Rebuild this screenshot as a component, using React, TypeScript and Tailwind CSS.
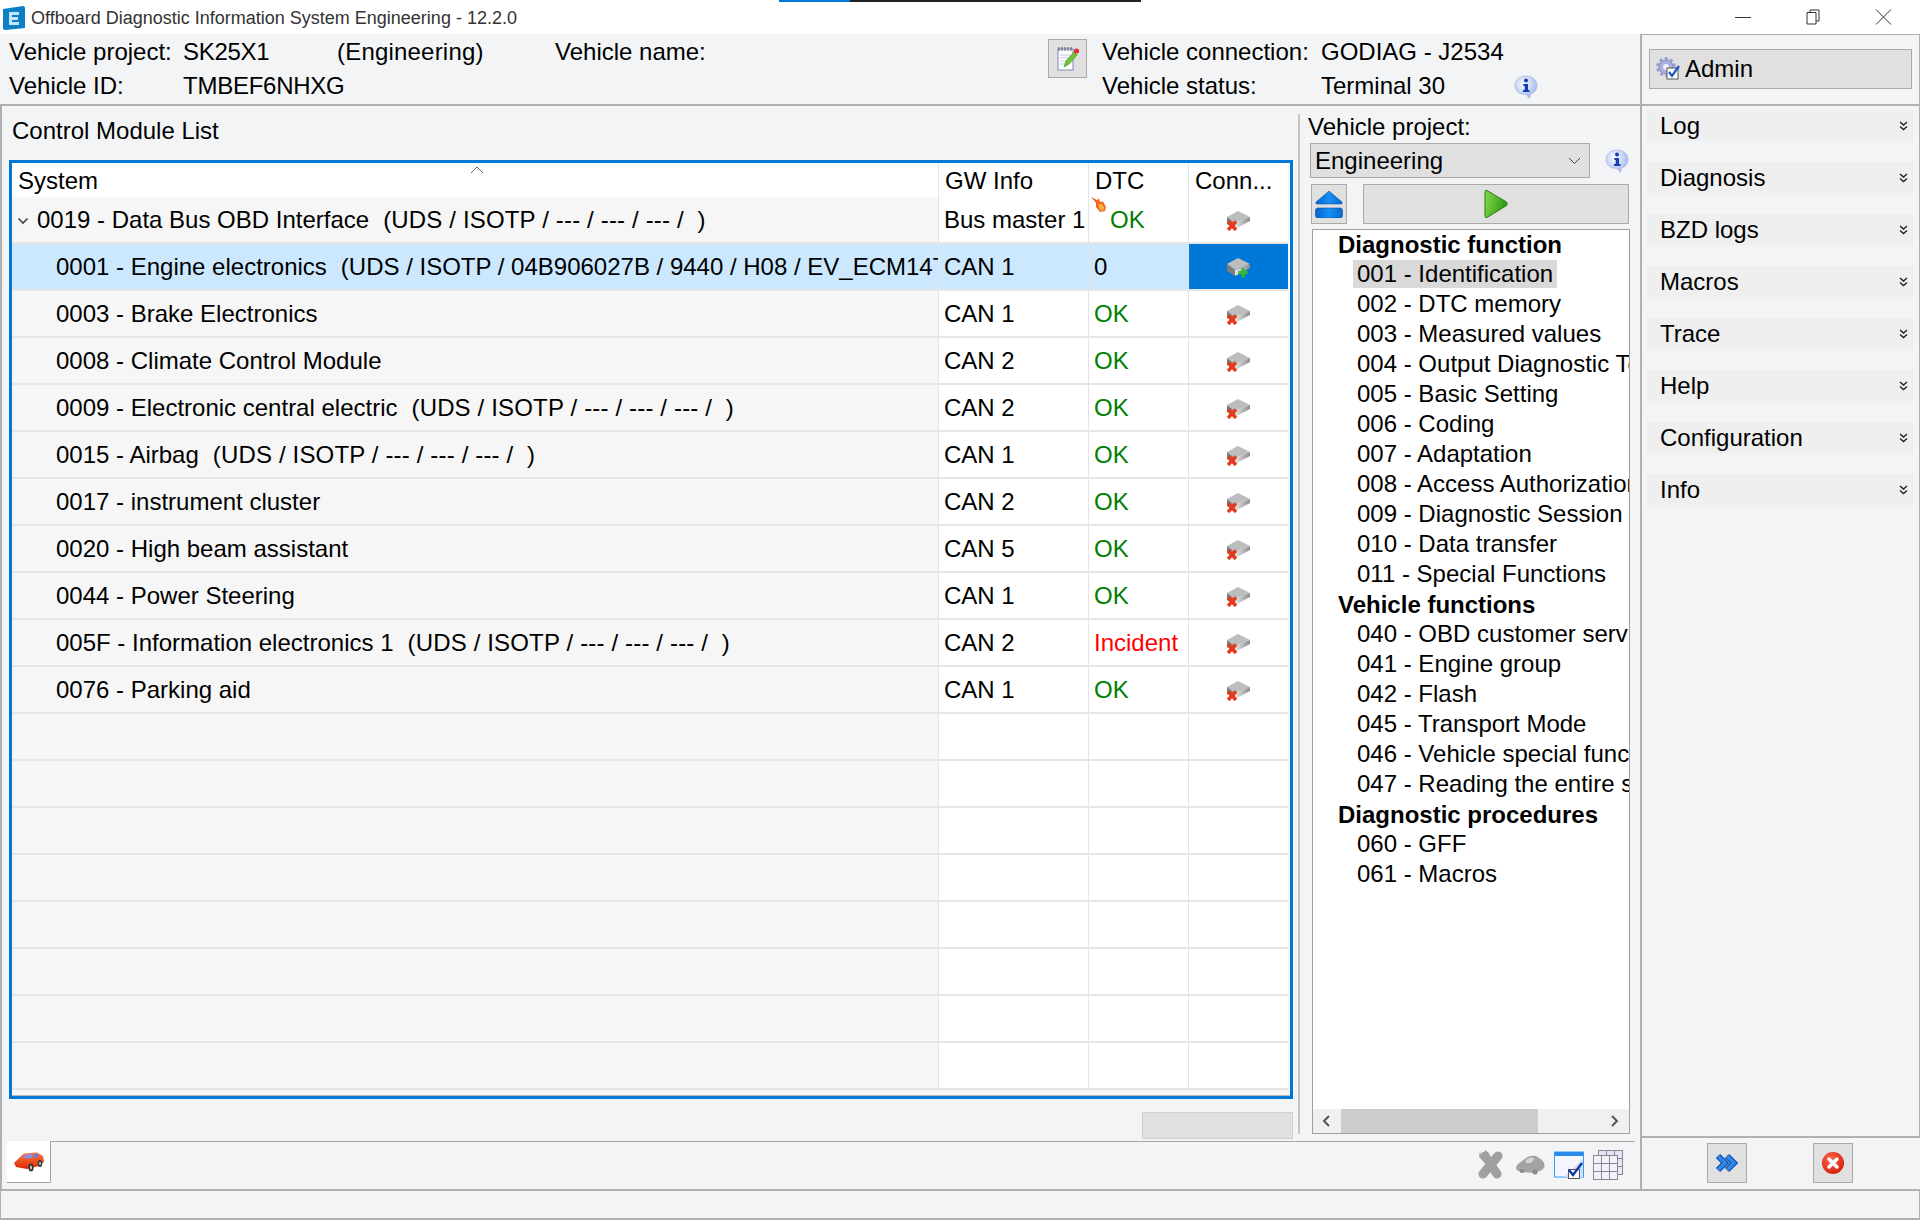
import React from "react";

const F = "font-['Liberation_Sans',Arial,sans-serif]";

function Drive({ kind }: { kind: "x" | "plus" }) {
  return (
    <svg width="23" height="20" viewBox="0 0 23 20" className="mt-[2px]">
      <defs>
        <linearGradient id="drv" x1="0" y1="0" x2="1" y2="0">
          <stop offset="0" stopColor="#e6e6e6" />
          <stop offset="1" stopColor="#8c8c8c" />
        </linearGradient>
      </defs>
      <path d="M0 6 L11 0 L23 6 L8 12 Z" fill="#bdbdbd" />
      <path d="M8 12 L23 6 L23 10 L8 18 Z" fill="url(#drv)" />
      <path d="M0 6 L8 12 L8 18 L0 13 Z" fill="#7d7d7d" />
      {kind === "x" ? (
        <path d="M1 10.500 L9 19 M9 10.500 L1 19" stroke="#e5391c" strokeWidth="3.400" fill="none" />
      ) : (
        <path d="M16 10 V19.500 M11.500 14.700 H20.500" stroke="#35b82f" strokeWidth="3.200" fill="none" />
      )}
    </svg>
  );
}

function Info() {
  return (
    <svg width="24" height="24" viewBox="0 0 24 24">
      <defs>
        <radialGradient id="inf" cx="0.4" cy="0.35" r="0.75">
          <stop offset="0" stopColor="#ffffff" />
          <stop offset="1" stopColor="#93abee" />
        </radialGradient>
      </defs>
      <path d="M12 1 C18.500 1 23 5 23 10.500 C23 15 20 18 16.500 19 L15.500 23.500 L12 19.500 C5.500 19.500 1 16 1 10.500 C1 5 5.500 1 12 1 Z" fill="url(#inf)" stroke="#aebbd8" strokeWidth="0.800" />
      <circle cx="12" cy="5.500" r="2" fill="#1241ad" />
      <path d="M9.300 9 H14 V15 H15.500 V17 H9 V15 H10.700 V11 H9.300 Z" fill="#1241ad" />
    </svg>
  );
}

function Chevrons() {
  return (
    <svg width="9" height="10" viewBox="0 0 9 10" className="shrink-0">
      <path d="M1 1 L4.500 4 L8 1 M1 5.500 L4.500 8.500 L8 5.500" stroke="#222" strokeWidth="1.400" fill="none" />
    </svg>
  );
}

function CarRed() {
  return (
    <svg width="32" height="22" viewBox="0 0 32 22">
      <defs>
        <linearGradient id="car" x1="0" y1="0" x2="0" y2="1">
          <stop offset="0" stopColor="#ff7a3c" />
          <stop offset="1" stopColor="#d92608" />
        </linearGradient>
      </defs>
      <path d="M1 12 L5 8 L11 2.500 L24 1.500 L30 5 L31 11 L26 15 L14 18 L3 16 Z" fill="url(#car)" />
      <path d="M9 7 L13 3.500 L20 3 L18 7.500 Z" fill="#8a8ee8" />
      <path d="M21 3 L26 3 L25 6 L20 7 Z" fill="#7478d0" />
      <ellipse cx="18" cy="16.500" rx="2.600" ry="4" fill="#333" />
      <ellipse cx="18" cy="16.500" rx="1" ry="2" fill="#ccc" />
      <ellipse cx="27" cy="12.500" rx="2.200" ry="3.600" fill="#333" />
      <ellipse cx="27" cy="12.500" rx="0.900" ry="1.800" fill="#ccc" />
    </svg>
  );
}

function NoteIcon() {
  return (
    <svg width="24" height="26" viewBox="0 0 24 26">
      <rect x="2" y="3" width="15" height="21" fill="#fff" stroke="#7d86b8" strokeWidth="1" />
      <path d="M3 1 V5 M6 1 V5 M9 1 V5 M12 1 V5 M15 1 V5" stroke="#555" strokeWidth="1" />
      <path d="M4 9 H15 M4 12 H15 M4 15 H13 M4 18 H13" stroke="#c4c9e6" strokeWidth="1" />
      <path d="M8 21 L10 15 L18 6 L21 9 L13 18 Z" fill="#6fc72f" stroke="#3d8a1a" strokeWidth="0.6" />
      <circle cx="20.500" cy="5" r="2.600" fill="#e0312a" />
    </svg>
  );
}

function AdminIcon() {
  return (
    <svg width="24" height="24" viewBox="0 0 24 24">
      <circle cx="10" cy="10" r="7" fill="#aab0dc" stroke="#7f86b6" strokeWidth="1" />
      <circle cx="10" cy="10" r="8.500" fill="none" stroke="#989fd0" strokeWidth="2.800" strokeDasharray="3 2.500" />
      <circle cx="10" cy="10" r="3" fill="#eef0fa" />
      <rect x="11" y="11" width="11" height="11" fill="#fff" stroke="#555" strokeWidth="1" />
      <path d="M13 15 L16 19 L23 9" stroke="#1557c9" strokeWidth="2.200" fill="none" />
    </svg>
  );
}

function Eject() {
  return (
    <svg width="28" height="28" viewBox="0 0 28 28">
      <defs>
        <linearGradient id="ej" x1="0" y1="0" x2="1" y2="0">
          <stop offset="0" stopColor="#0a62cf" />
          <stop offset="0.500" stopColor="#1590f2" />
          <stop offset="1" stopColor="#0b66d2" />
        </linearGradient>
      </defs>
      <path d="M14 1 L27 12 Q27.500 14 26 14 H2 Q0.500 14 1 12 Z" fill="url(#ej)" stroke="#0b4fa8" strokeWidth="0.6" />
      <rect x="0.500" y="18" width="27" height="10" rx="2.500" fill="url(#ej)" stroke="#0b4fa8" strokeWidth="0.6" />
    </svg>
  );
}

function Play() {
  return (
    <svg width="24" height="30" viewBox="0 0 24 30">
      <defs>
        <linearGradient id="pl" x1="0" y1="0" x2="1" y2="0.300">
          <stop offset="0" stopColor="#8ad94a" />
          <stop offset="1" stopColor="#2e9c16" />
        </linearGradient>
      </defs>
      <path d="M1 3 Q1 1 3 1.500 L22.500 13 Q24 15 22.500 16.500 L3 28.500 Q1 29 1 27 Z" fill="url(#pl)" stroke="#247d12" strokeWidth="1" />
    </svg>
  );
}

function Flame() {
  return (
    <svg width="16" height="16" viewBox="0 0 16 16">
      <path d="M0 0 L6 3 L8 1.500 L9 5 L12 4.500 L15 10 L14 14 L9 15 L5 10 L5 6 Z" fill="#f4661c" />
      <path d="M7 7 L11 7 L13.500 11 L12 13.500 L9 13 Z" fill="#fbb13c" />
    </svg>
  );
}

type Row = { name: string; proto?: string; gw: string; dtc: string; root?: boolean; sel?: boolean };

const rows: Row[] = [
  { name: "0019 - Data Bus OBD Interface", proto: "(UDS / ISOTP / --- / --- / --- /  )", gw: "Bus master 1", dtc: "OK", root: true },
  { name: "0001 - Engine electronics", proto: "(UDS / ISOTP / 04B906027B / 9440 / H08 / EV_ECM14TFS01104B906027B  )", gw: "CAN 1", dtc: "0", sel: true },
  { name: "0003 - Brake Electronics", gw: "CAN 1", dtc: "OK" },
  { name: "0008 - Climate Control Module", gw: "CAN 2", dtc: "OK" },
  { name: "0009 - Electronic central electric", proto: "(UDS / ISOTP / --- / --- / --- /  )", gw: "CAN 2", dtc: "OK" },
  { name: "0015 - Airbag", proto: "(UDS / ISOTP / --- / --- / --- /  )", gw: "CAN 1", dtc: "OK" },
  { name: "0017 - instrument cluster", gw: "CAN 2", dtc: "OK" },
  { name: "0020 - High beam assistant", gw: "CAN 5", dtc: "OK" },
  { name: "0044 - Power Steering", gw: "CAN 1", dtc: "OK" },
  { name: "005F - Information electronics 1", proto: "(UDS / ISOTP / --- / --- / --- /  )", gw: "CAN 2", dtc: "Incident" },
  { name: "0076 - Parking aid", gw: "CAN 1", dtc: "OK" },
];

const tree: { head: string; items: string[] }[] = [
  {
    head: "Diagnostic function",
    items: [
      "001 - Identification",
      "002 - DTC memory",
      "003 - Measured values",
      "004 - Output Diagnostic Test Mode",
      "005 - Basic Setting",
      "006 - Coding",
      "007 - Adaptation",
      "008 - Access Authorization",
      "009 - Diagnostic Session",
      "010 - Data transfer",
      "011 - Special Functions",
    ],
  },
  {
    head: "Vehicle functions",
    items: [
      "040 - OBD customer service",
      "041 - Engine group",
      "042 - Flash",
      "045 - Transport Mode",
      "046 - Vehicle special functions",
      "047 - Reading the entire system",
    ],
  },
  { head: "Diagnostic procedures", items: ["060 - GFF", "061 - Macros"] },
];

const menu = ["Log", "Diagnosis", "BZD logs", "Macros", "Trace", "Help", "Configuration", "Info"];

export default function App() {
  const empties = Array.from({ length: 8 });
  return (
    <div className={`${F} w-[1920px] h-[1220px] overflow-hidden bg-[#f3f4f6] text-[24px] leading-none text-black flex flex-col`}>
      {/* title bar */}
      <div className="relative h-[34px] bg-white flex items-center shrink-0">
        <div className="absolute top-0 left-[779px] w-[71px] h-[2px] bg-[#0078d7]" />
        <div className="absolute top-0 left-[850px] w-[291px] h-[2px] bg-[#222]" />
        <svg width="22" height="24" viewBox="0 0 22 24" className="ml-[3px] mt-[1px]">
          <path d="M0 3 L20 0 Q22 0 22 2 V22 L2 24 Q0 24 0 22 Z" fill="#0d7fc4" />
          <path d="M6 6 H16 V9 H9 V11 H15 V14 H9 V16 H16 V19 H6 Z" fill="#bfe6fb" />
        </svg>
        <span className="ml-[6px] mt-[2px] text-[18px] text-[#333]">Offboard Diagnostic Information System Engineering - 12.2.0</span>
        <div className="ml-auto mr-[2px] flex items-center">
          <div className="w-[70px] flex justify-center">
            <div className="w-[16px] h-[1px] bg-[#333]" />
          </div>
          <div className="w-[70px] flex justify-center">
            <svg width="14" height="16" viewBox="0 0 14 16">
              <path d="M4 3 V1 H13 V12 H10 M1 3.500 H10 V15 H1 Z" fill="none" stroke="#333" strokeWidth="1" />
            </svg>
          </div>
          <div className="w-[70px] flex justify-center">
            <svg width="17" height="16" viewBox="0 0 17 16">
              <path d="M1 0.500 L16 15.500 M16 0.500 L1 15.500" fill="none" stroke="#333" strokeWidth="1" />
            </svg>
          </div>
        </div>
      </div>

      <div className="flex flex-1 min-h-0">
        {/* left */}
        <div className="w-[1640px] shrink-0 flex flex-col">
          {/* header */}
          <div className="h-[72px] shrink-0 border-b-2 border-[#b0b0b0] flex">
            <div className="w-[1048px] shrink-0 pl-[9px] pt-[1px] grid grid-cols-[174px_154px_218px_1fr] grid-rows-[34px_34px] items-center">
              <span>Vehicle project:</span>
              <span className="tracking-[-0.3px]">SK25X1</span>
              <span className="tracking-[0.2px]">(Engineering)</span>
              <span>Vehicle name:</span>
              <span>Vehicle ID:</span>
              <span className="tracking-[-0.25px]">TMBEF6NHXG</span>
            </div>
            <div className="pt-[5px] shrink-0">
              <div className="w-[39px] h-[39px] bg-[#e0e0e0] border border-[#aaaaaa] flex items-center justify-center">
                <NoteIcon />
              </div>
            </div>
            <div className="ml-[15px] pt-[1px] grid grid-cols-[219px_193px_24px] grid-rows-[34px_34px] items-center">
              <span>Vehicle connection:</span>
              <span className="col-span-2">GODIAG - J2534</span>
              <span>Vehicle status:</span>
              <span>Terminal 30</span>
              <span className="mt-[2px]">
                <Info />
              </span>
            </div>
          </div>

          {/* content */}
          <div className="flex-1 min-h-0 flex border-l-2 border-[#b0b0b0]">
            {/* module list */}
            <div className="w-[1295px] shrink-0 flex flex-col pl-[7px]">
              <div className="h-[54px] shrink-0 pl-[3px] pb-[5px] flex items-center">Control Module List</div>
              <div className="w-[1284px] h-[939px] shrink-0 border-[3px] border-[#0078d7] bg-[#f6f6f6] overflow-hidden flex flex-col">
                <div className="h-[34px] shrink-0 bg-white flex items-center relative mr-[2px]">
                  <div className="w-[926px] pl-[6px] pt-[1px]">System</div>
                  <svg width="14" height="8" viewBox="0 0 14 8" className="absolute left-[458px] top-[3px]">
                    <path d="M1 7 L7 1 L13 7" stroke="#666" strokeWidth="1" fill="none" />
                  </svg>
                  <div className="w-[150px] pl-[6px] pt-[1px] border-l border-[#e4e4e4] h-full flex items-center">GW Info</div>
                  <div className="w-[100px] pl-[6px] pt-[1px] border-l border-[#e4e4e4] h-full flex items-center">DTC</div>
                  <div className="flex-1 pl-[6px] pt-[1px] border-l border-[#e4e4e4] h-full flex items-center">Conn...</div>
                </div>
                {rows.map((r) => (
                  <div key={r.name} className={`h-[47px] shrink-0 flex mr-[2px] border-b-2 border-[#e6e6e6] ${r.sel ? "bg-[#cce8ff]" : ""}`}>
                    <div className={`w-[926px] shrink-0 flex items-center whitespace-pre overflow-hidden ${r.root ? "pl-[5px]" : "pl-[44px]"}`}>
                      {r.root && (
                        <svg width="12" height="8" viewBox="0 0 12 8" className="mr-[8px] mt-[2px] shrink-0">
                          <path d="M1.500 1.500 L6 6 L10.500 1.500" stroke="#444" strokeWidth="1.600" fill="none" />
                        </svg>
                      )}
                      <span>{r.name}</span>
                      {r.proto && (
                        <span className={`ml-[14px] ${r.sel ? "" : "tracking-[0.16px]"}`}>{r.proto}</span>
                      )}
                    </div>
                    <div className={`w-[150px] shrink-0 pl-[5px] border-l border-[#e4e4e4] flex items-center whitespace-nowrap overflow-hidden ${r.sel ? "" : "bg-white"}`}>{r.gw}</div>
                    <div className={`w-[100px] shrink-0 pl-[5px] border-l border-[#e4e4e4] flex items-center relative ${r.sel ? "" : "bg-white"} ${r.dtc === "OK" ? "text-[#008000]" : r.dtc === "Incident" ? "text-[#ff0000]" : ""}`}>
                      {r.root && (
                        <span className="absolute left-[2px] top-0">
                          <Flame />
                        </span>
                      )}
                      <span className={r.root ? "ml-[16px]" : ""}>{r.dtc}</span>
                    </div>
                    <div className={`flex-1 border-l border-[#e4e4e4] flex items-center justify-center ${r.sel ? "bg-[#0078d7]" : "bg-white"}`}>
                      <Drive kind={r.sel ? "plus" : "x"} />
                    </div>
                  </div>
                ))}
                {empties.map((_, i) => (
                  <div key={i} className="h-[47px] shrink-0 flex mr-[2px] border-b-2 border-[#e6e6e6]">
                    <div className="w-[926px] shrink-0" />
                    <div className="w-[150px] shrink-0 border-l border-[#e4e4e4] bg-white" />
                    <div className="w-[100px] shrink-0 border-l border-[#e4e4e4] bg-white" />
                    <div className="flex-1 border-l border-[#e4e4e4] bg-white" />
                  </div>
                ))}
                <div className="flex-1 border-b border-[#b8b8b8]" />
              </div>
              <div className="flex justify-end pt-[13px] pr-[4px]">
                <div className="w-[151px] h-[27px] bg-[#e0e0e0] border border-[#cfcfcf]" />
              </div>
            </div>

            {/* function panel */}
            <div className="flex-1 min-w-0 flex flex-col pt-[8px] pb-[7px]">
              <div className="flex-1 min-h-0 ml-[1px] border-l-2 border-[#c4c4c4] pl-[8px] flex flex-col">
                <div className="h-[26px] flex items-center">Vehicle project:</div>
                <div className="flex items-center mt-[3px]">
                  <div className="ml-[2px] w-[280px] h-[35px] bg-[#e0e0e0] border border-[#aaaaaa] flex items-center justify-between pl-[4px] pr-[8px]">
                    <span>Engineering</span>
                    <svg width="13" height="8" viewBox="0 0 13 8">
                      <path d="M1 1 L6.500 6.500 L12 1" stroke="#444" strokeWidth="1" fill="none" />
                    </svg>
                  </div>
                  <div className="ml-[15px]">
                    <Info />
                  </div>
                </div>
                <div className="flex mt-[6px] gap-[16px] ml-[3px]">
                  <div className="w-[36px] h-[40px] bg-[#e0e0e0] border border-[#aaaaaa] flex items-center justify-center">
                    <Eject />
                  </div>
                  <div className="w-[266px] h-[40px] bg-[#e0e0e0] border border-[#aaaaaa] flex items-center justify-center">
                    <Play />
                  </div>
                </div>
                <div className="ml-[4px] mt-[5px] w-[318px] flex-1 min-h-0 border border-[#a0a0a0] bg-white flex flex-col overflow-hidden">
                  <div className="flex-1 min-h-0 overflow-hidden pl-[25px] pt-[1px] whitespace-nowrap">
                    {tree.map((t, i) => (
                      <div key={t.head} className={i > 0 ? "mt-[2px]" : ""}>
                        <div className="h-[28px] flex items-center font-bold">{t.head}</div>
                        {t.items.map((it) => (
                          <div key={it} className="h-[30px] flex items-center pl-[15px]">
                            <span className={`px-[4px] h-[28px] flex items-center ${it.startsWith("001") ? "bg-[#d9d9d9]" : ""}`}>{it}</span>
                          </div>
                        ))}
                      </div>
                    ))}
                  </div>
                  <div className="h-[24px] shrink-0 bg-[#f0f0f0] flex items-center justify-between pl-[8px] pr-[9px] relative">
                    <svg width="10" height="12" viewBox="0 0 10 12">
                      <path d="M8 1 L3 6 L8 11" stroke="#555" strokeWidth="2" fill="none" />
                    </svg>
                    <div className="absolute left-[28px] top-0 w-[197px] h-full bg-[#cdcdcd]" />
                    <svg width="10" height="12" viewBox="0 0 10 12">
                      <path d="M2 1 L7 6 L2 11" stroke="#555" strokeWidth="2" fill="none" />
                    </svg>
                  </div>
                </div>
              </div>
            </div>
          </div>

          {/* bottom toolbar */}
          <div className="h-[50px] shrink-0 border-b-2 border-[#b0b0b0] flex border-l-2 border-l-[#b0b0b0] pl-[5px] items-start">
            <div className="w-[44px] h-[42px] bg-white border-r border-b border-[#a0a0a0] rounded-br-[2px] flex items-center justify-center shrink-0">
              <CarRed />
            </div>
            <div className="w-[1584px] h-[42px] border-t border-[#a8a8a8] flex items-center justify-end pr-[12px] pt-[4px] gap-[9px]">
              <svg width="28" height="29" viewBox="0 0 28 29" className="mr-[2px]">
                <path d="M9 6 L21 24 M22 6 L7 24" stroke="#a0a0a0" strokeWidth="9" strokeLinecap="round" fill="none" />
                <path d="M4 1 L5 6 L9 6 L9 0 L13 3 L13 9 L7 11 L3 7 Z" fill="#a0a0a0" />
              </svg>
              <svg width="30" height="22" viewBox="0 0 30 22">
                <path d="M1 13 L3 10 L11 4 Q15 1 21 2 L27 6 Q30 9 29.500 13 L27 16 L20 19 L7 18 L1.500 16 Z" fill="#a3a3a3" />
                <path d="M11 6 L15 3.500 L20 4 L16 9 L10 9 Z" fill="#d4d4d4" />
                <ellipse cx="7" cy="17" rx="2.500" ry="2" fill="#8a8a8a" />
                <ellipse cx="20" cy="18" rx="2.500" ry="2.500" fill="#8a8a8a" />
              </svg>
              <svg width="30" height="28" viewBox="0 0 30 28">
                <rect x="0.500" y="1" width="29" height="25" fill="#f5f6ff" stroke="#2aa0ff" strokeWidth="1" />
                <rect x="1" y="1" width="28" height="4" fill="#2a8bea" />
                <path d="M10 26 L29 8 V26 Z" fill="#d9daf5" />
                <rect x="14.500" y="18.500" width="11" height="9" fill="#fff" stroke="#555" />
                <path d="M15 19 L19 24 L28 12" stroke="#0f3fa8" strokeWidth="2.500" fill="none" />
              </svg>
              <svg width="30" height="30" viewBox="0 0 30 30">
                <rect x="5.500" y="0.500" width="24" height="24" fill="#e4e4fa" stroke="#8a8a8a" />
                <rect x="0.500" y="5.500" width="24" height="24" fill="#f2f2fd" stroke="#8a8a8a" />
                <path d="M8.500 5.500 V29.500 M16.500 5.500 V29.500 M0.500 13.500 H24.500 M0.500 21.500 H24.500 M13.500 0.500 V5.500 M21.500 0.500 V5.500 M24.500 8.500 H29.500 M24.500 16.500 H29.500" stroke="#8a8a8a" fill="none" />
              </svg>
            </div>
          </div>
        </div>

        {/* right panel */}
        <div className="w-[280px] shrink-0 flex flex-col border-l-2 border-[#b0b0b0]">
          <div className="h-[72px] shrink-0 border-t border-b-2 border-r border-[#b0b0b0] pl-[7px] pt-[14px] pr-[7px]">
            <div className="h-[40px] bg-[#e0e0e0] border border-[#aaaaaa] flex items-center pl-[6px] gap-[5px]">
              <AdminIcon />
              <span>Admin</span>
            </div>
          </div>
          <div className="flex-1 min-h-0 flex flex-col border-r border-[#b0b0b0] pt-[4px] px-[5px] gap-[21px]">
            {menu.map((m) => (
              <div key={m} className="h-[31px] shrink-0 bg-[#efefef] flex items-center justify-between pl-[13px] pr-[6px]">
                <span>{m}</span>
                <Chevrons />
              </div>
            ))}
          </div>
          <div className="h-[55px] shrink-0 border-t-2 border-b-2 border-[#b0b0b0] flex items-start pt-[5px] pl-[65px] gap-[66px]">
            <div className="w-[40px] h-[40px] bg-[#e0e0e0] border border-[#aaaaaa] flex items-center justify-center">
              <svg width="24" height="20" viewBox="0 0 24 20">
                <path d="M3 3 L10 10 L3 17 M12 3 L19 10 L12 17" stroke="#0d4aa8" strokeWidth="6" fill="none" />
                <path d="M3 3 L10 10 L3 17 M12 3 L19 10 L12 17" stroke="#2f86e6" strokeWidth="3.800" fill="none" />
              </svg>
            </div>
            <div className="w-[40px] h-[40px] bg-[#e0e0e0] border border-[#aaaaaa] flex items-center justify-center">
              <svg width="24" height="24" viewBox="0 0 24 24">
                <defs>
                  <radialGradient id="stop" cx="0.4" cy="0.35" r="0.7">
                    <stop offset="0" stopColor="#ff6a4a" />
                    <stop offset="1" stopColor="#d41a0c" />
                  </radialGradient>
                </defs>
                <circle cx="12" cy="12" r="11" fill="url(#stop)" />
                <path d="M8 8 L16 16 M16 8 L8 16" stroke="#fff" strokeWidth="3.500" strokeLinecap="round" />
              </svg>
            </div>
          </div>
        </div>
      </div>

      {/* status bar */}
      <div className="h-[29px] shrink-0 border-x border-b-2 border-[#b0b0b0]" />
    </div>
  );
}
